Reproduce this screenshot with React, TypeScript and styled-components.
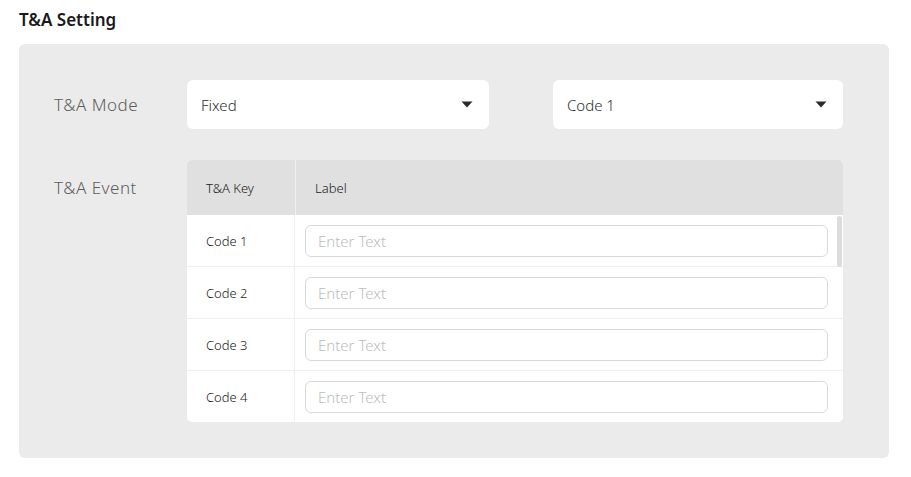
import React from 'react'
import styled, { createGlobalStyle } from 'styled-components'

const GlobalStyle = createGlobalStyle`
  body {
    margin: 0;
    background: #fff;
    font-family: "Noto Sans", "Open Sans", sans-serif;
  }
`

const codes = ['Code 1', 'Code 2', 'Code 3', 'Code 4']

const Select: React.FC<{ value: string }> = ({ value }) => (
  <SelectBox>
    <span>{value}</span>
    <svg width="12" height="7" viewBox="0 0 12 7">
      <path d="M0.5 0.5 L11.5 0.5 L6 6.5 Z" fill="#2b2b2b" />
    </svg>
  </SelectBox>
)

const App: React.FC = () => {
  return (
    <PageWrap>
      <GlobalStyle />
      <Title>T&amp;A Setting</Title>
      <Panel>
        <FieldLabel height={49}>T&amp;A Mode</FieldLabel>
        <SelectRow>
          <Select value="Fixed" />
          <Select value="Code 1" />
        </SelectRow>

        <FieldLabel height={55}>T&amp;A Event</FieldLabel>
        <Table>
          <HeadRow>
            <HeadCell>T&amp;A Key</HeadCell>
            <HeadCell>Label</HeadCell>
          </HeadRow>
          <Body>
            {codes.map(code => (
              <Row key={code}>
                <KeyCell>{code}</KeyCell>
                <InputCell>
                  <TextInput placeholder="Enter Text" />
                </InputCell>
              </Row>
            ))}
            <ScrollThumb />
          </Body>
        </Table>
      </Panel>
    </PageWrap>
  )
}

const PageWrap = styled.div`
padding: 9px 22px 19px 19px;
`

const Title = styled.h1`
margin: 0 0 13px;
font-size: 17px;
line-height: 22px;
font-weight: 600;
color: #1a1a1a;
`

const Panel = styled.div`
background: #ebebeb;
border-radius: 6px;
padding: 36px 46px 36px 35px;
display: grid;
grid-template-columns: 133px 1fr;
row-gap: 31px;
`

const FieldLabel = styled.div<{ height: number }>`
height: ${props => props.height}px;
display: flex;
align-items: center;
font-size: 17px;
font-weight: 350;
letter-spacing: 0.5px;
color: #5e5e5e;
`

const SelectRow = styled.div`
display: grid;
grid-template-columns: 302px 1fr;
column-gap: 64px;
`

const SelectBox = styled.div`
height: 49px;
box-sizing: border-box;
background: #fff;
border-radius: 6px;
padding: 0 16px 0 14px;
display: flex;
align-items: center;
justify-content: space-between;
font-size: 15px;
font-weight: 350;
color: #2e2e2e;
`

const Table = styled.div`
background: #fff;
border-radius: 5px;
overflow: hidden;
`

const HeadRow = styled.div`
display: grid;
grid-template-columns: 108px 1fr;
height: 55px;
background: #e0e0e0;
`

const HeadCell = styled.div`
display: flex;
align-items: center;
padding-left: 19px;
font-size: 13px;
font-weight: 350;
color: #222;
& + & {
  border-left: 1px solid #f0f0f0;
}
`

const Body = styled.div`
position: relative;
height: 207px;
overflow: hidden;
`

const ScrollThumb = styled.div`
position: absolute;
top: 1px;
right: 1px;
width: 5px;
height: 51px;
border-radius: 3px;
background: #dcdcdc;
`

const Row = styled.div`
display: grid;
grid-template-columns: 108px 1fr;
height: 52px;
box-sizing: border-box;
border-bottom: 1px solid #efefef;
`

const KeyCell = styled.div`
display: flex;
align-items: center;
padding-left: 19px;
font-size: 13px;
font-weight: 350;
color: #222;
border-right: 1px solid #efefef;
`

const InputCell = styled.div`
display: flex;
align-items: center;
padding: 0 15px 0 10px;
`

const TextInput = styled.input`
width: 100%;
height: 32px;
box-sizing: border-box;
border: 1px solid #d9d9d9;
border-radius: 6px;
padding: 0 12px;
font-family: inherit;
font-size: 15px;
font-weight: 350;
color: #333;
outline: none;
&::placeholder {
  color: #bdbdbd;
}
`

export default App
